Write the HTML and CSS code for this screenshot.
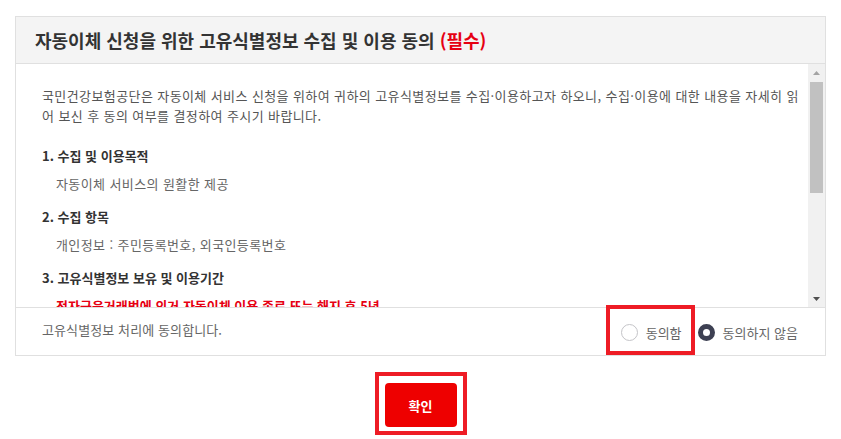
FILE: index.html
```html
<!DOCTYPE html>
<html lang="ko">
<head>
	<meta charset="UTF-8">
	<title>고유식별정보 수집 및 이용 동의</title>
	<link rel="stylesheet" href="styles.css">
</head>
<body>
<div class="page">
	<div class="agree-box">
		<div class="agree-head">
			<h2>자동이체 신청을 위한 고유식별정보 수집 및 이용 동의 <em>(필수)</em></h2>
		</div>
		<div class="agree-body">
			<div class="agree-text">
				<p class="lead">국민건강보험공단은 자동이체 서비스 신청을 위하여 귀하의 고유식별정보를 수집·이용하고자 하오니, 수집·이용에 대한 내용을 자세히 읽어 보신 후 동의 여부를 결정하여 주시기 바랍니다.</p>
				<div class="sec">
					<h3>1. 수집 및 이용목적</h3>
					<p>자동이체 서비스의 원활한 제공</p>
				</div>
				<div class="sec">
					<h3>2. 수집 항목</h3>
					<p>개인정보 : 주민등록번호, 외국인등록번호</p>
				</div>
				<div class="sec">
					<h3>3. 고유식별정보 보유 및 이용기간</h3>
					<p class="red">전자금융거래법에 의거 자동이체 이용 종료 또는 해지 후 5년</p>
				</div>
				<div class="sec">
					<h3>4. 동의를 거부할 권리 및 동의 거부 시 불이익</h3>
					<p>귀하는 고유식별정보 수집·이용에 대한 동의를 거부할 권리가 있습니다.</p>
					<p>다만, 동의를 거부하실 경우 자동이체 서비스 신청이 제한됩니다.</p>
				</div>
			</div>
			<div class="scrollbar">
				<span class="sb-btn"><svg width="7" height="4" viewBox="0 0 7 4"><path d="M0 4L3.5 0L7 4Z" fill="#a3a3a3"/></svg></span>
				<span class="sb-track"><i class="sb-thumb"></i></span>
				<span class="sb-btn"><svg width="7" height="4" viewBox="0 0 7 4"><path d="M0 0L7 0L3.5 4Z" fill="#505050"/></svg></span>
			</div>
		</div>
		<div class="agree-foot">
			<span class="foot-txt">고유식별정보 처리에 동의합니다.</span>
			<div class="radios">
				<label class="opt mark"><i class="radio"></i>동의함</label>
				<label class="opt"><i class="radio on"></i>동의하지 않음</label>
			</div>
		</div>
	</div>
	<div class="btn-area">
		<div class="btn-mark">
			<button class="btn-ok" type="button">확인</button>
		</div>
	</div>
</div>
</body>
</html>
```

FILE: styles.css
```css
*{
	box-sizing: border-box;
	margin: 0;
	padding: 0;
}
body{
	font-family: "Noto Sans CJK KR", "Noto Sans", sans-serif;
	color: #555;
	background: #fff;
}
.page{
	padding: 16px 15px 0 15px;
}
.agree-box{
	border: 1px solid #e0e0e0;
}
.agree-head{
	height: 47px;
	background-color: #f4f4f4;
	border-bottom: 1px solid #e0e0e0;
	padding: 0 19px 1px 19px;
	display: flex;
	align-items: center;
}
.agree-head h2{
	font-size: 18px;
	font-weight: 700;
	color: #333;
}
.agree-head em{
	font-style: normal;
	color: #e60012;
}
.agree-body{
	height: 243px;
	display: flex;
}
.agree-text{
	flex: 1;
	overflow: hidden;
	padding: 22px 3px 0 26px;
	font-size: 13px;
	line-height: 20px;
	letter-spacing: 0.4px;
}
/* 스크롤바 */
.scrollbar{
	width: 17px;
	display: flex;
	flex-direction: column;
	background-color: #f1f1f1;
}
.sb-btn{
	height: 17px;
	display: flex;
	align-items: center;
	justify-content: center;
}
.sb-btn svg{
	display: block;
}
.sb-track{
	flex: 1;
	padding: 1px 2px 0 2px;
}
.sb-thumb{
	display: block;
	height: 111px;
	background-color: #c1c1c1;
}
.lead{
	color: #555;
}
.sec{
	margin-top: 13px;
}
.lead + .sec{
	margin-top: 20px;
}
.sec h3{
	font-size: 13px;
	font-weight: 700;
	color: #333;
	line-height: 20px;
	letter-spacing: 0;
}
.sec p{
	margin-top: 8px;
	padding-left: 14px;
	color: #666;
}
.sec p + p{
	margin-top: 0;
}
.sec p.red{
	color: #e60012;
	font-weight: 700;
	letter-spacing: 0;
}
.agree-foot{
	height: 48px;
	border-top: 1px solid #e0e0e0;
	display: flex;
	align-items: stretch;
	justify-content: space-between;
	padding: 0 27px 0 26px;
	font-size: 13px;
	color: #666;
}
.foot-txt{
	display: flex;
	align-items: center;
	padding-bottom: 4px;
	letter-spacing: 0.1px;
}
.radios{
	display: flex;
	gap: 16px;
}
.opt{
	position: relative;
	display: flex;
	align-items: center;
	gap: 8px;
	padding-top: 2px;
}
.radio{
	width: 17px;
	height: 17px;
	border: 1px solid #c4c4c8;
	border-radius: 50%;
	background: #fff;
}
.radio.on{
	border: 5px solid #3d4052;
}
.opt.mark:after{
	content: "";
	position: absolute;
	top: -3px;
	bottom: 0;
	left: -15px;
	right: -13px;
	border: 4px solid #ee1c25;
}
.btn-area{
	display: flex;
	justify-content: center;
	padding-top: 16px;
}
.btn-mark{
	border: 4px solid #ee1c25;
	padding: 7px 6px 4px 6px;
}
.btn-ok{
	display: block;
	width: 72px;
	height: 44px;
	border: none;
	border-radius: 4px;
	background-color: #ee0000;
	color: #fff;
	font-family: "Noto Sans CJK KR", sans-serif;
	font-size: 13px;
	font-weight: 700;
}
```
